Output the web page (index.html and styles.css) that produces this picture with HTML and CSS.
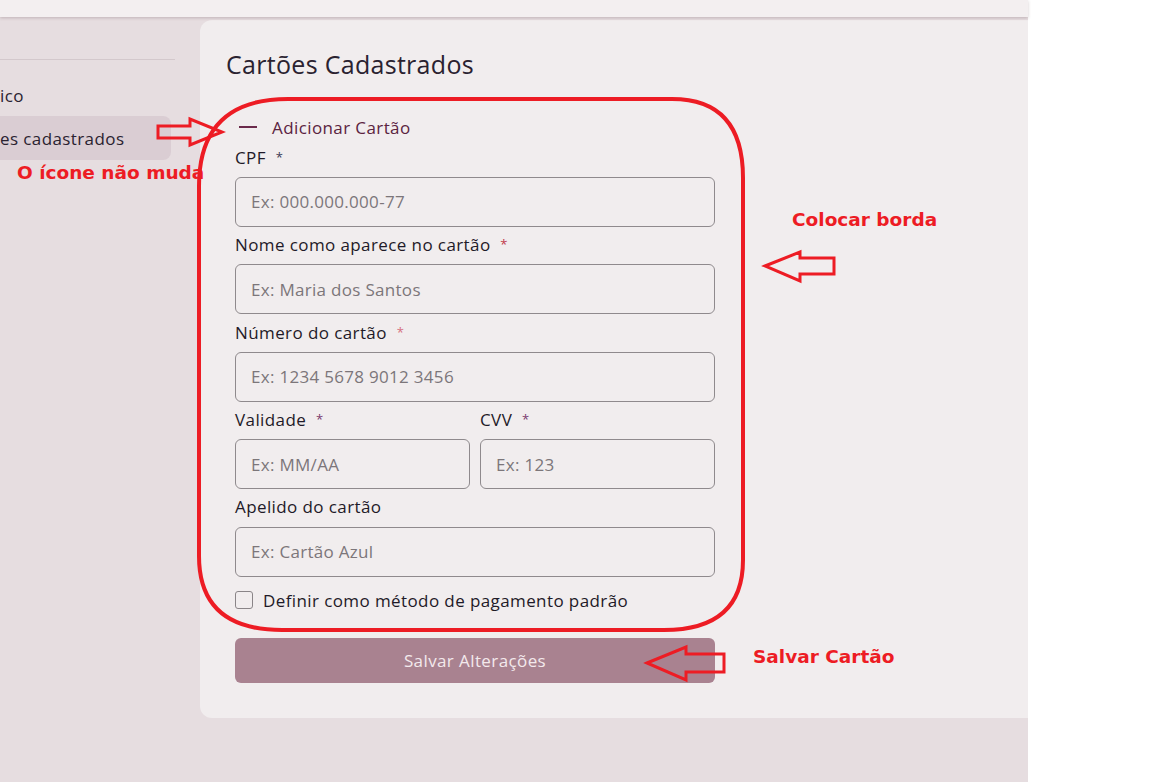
FILE: index.html
```html
<!DOCTYPE html>
<html lang="pt-BR">
<head>
<meta charset="utf-8">
<title>Cartões Cadastrados</title>
<link rel="stylesheet" href="styles.css">
</head>
<body>
<div class="app">
  <header class="topbar"></header>
  <div class="main">
    <aside class="sidebar">
      <div class="divider"></div>
      <nav class="nav">
        <a class="nav-item">ico</a>
        <a class="nav-item active">es cadastrados</a>
      </nav>
    </aside>
    <section class="card">
      <h2 class="title">Cartões Cadastrados</h2>
      <form class="form">
        <div class="toggle">
          <svg class="minus" width="18" height="4" viewBox="0 0 18 4"><rect x="0" y="1" width="18" height="2" fill="#6b2a4b"/></svg>
          <span>Adicionar Cartão</span>
        </div>
        <div class="field">
          <label class="label">CPF <span class="req req-dark">*</span></label>
          <input class="input" placeholder="Ex: 000.000.000-77">
        </div>
        <div class="field">
          <label class="label">Nome como aparece no cartão <span class="req req-red">*</span></label>
          <input class="input" placeholder="Ex: Maria dos Santos">
        </div>
        <div class="field">
          <label class="label">Número do cartão <span class="req req-pink">*</span></label>
          <input class="input" placeholder="Ex: 1234 5678 9012 3456">
        </div>
        <div class="row">
          <div class="field">
            <label class="label">Validade <span class="req req-purple">*</span></label>
            <input class="input" placeholder="Ex: MM/AA">
          </div>
          <div class="field">
            <label class="label">CVV <span class="req req-purple">*</span></label>
            <input class="input" placeholder="Ex: 123">
          </div>
        </div>
        <div class="field">
          <label class="label">Apelido do cartão</label>
          <input class="input" placeholder="Ex: Cartão Azul">
        </div>
        <label class="check">
          <input type="checkbox" class="checkbox">
          <span>Definir como método de pagamento padrão</span>
        </label>
        <button type="button" class="btn">Salvar Alterações</button>
      </form>
    </section>
  </div>

  <svg class="marks" width="1152" height="782" viewBox="0 0 1152 782">
    <path d="M288 99 L672 99 Q743 99 743 178 L743 560 Q743 630 664 630 L282 630 Q199 630 199 556 L199 186 Q199 99 288 99 Z" fill="none" stroke="#ed1c24" stroke-width="4"/>
    <path d="M158 126 L190 126 L190 119 L222 132 L190 145 L190 138 L158 138 Z" fill="none" stroke="#ed1c24" stroke-width="3"/>
    <path d="M765 266 L800 252 L800 258 L834 258 L834 274 L800 274 L800 281 Z" fill="none" stroke="#ed1c24" stroke-width="3"/>
    <path d="M647 663 L686 647 L686 654 L724 654 L724 672 L686 672 L686 680 Z" fill="none" stroke="#ed1c24" stroke-width="3"/>
  </svg>
  <div class="note note-icon">O ícone não muda</div>
  <div class="note note-border">Colocar borda</div>
  <div class="note note-save">Salvar Cartão</div>
</div>
</body>
</html>
```

FILE: styles.css
```css
* { box-sizing: border-box; }
html, body { margin: 0; padding: 0; background: #ffffff; }
body {
  font-family: "Open Sans", "Noto Sans", sans-serif;
  color: #1f1a28;
}
.app {
  position: relative;
  width: 1028px;
  height: 782px;
  background: #e6dde0;
}
.topbar {
  height: 17px;
  background: #f3eff0;
  box-shadow: 0 1px 3px rgba(80, 50, 60, 0.25);
  position: relative;
  z-index: 1;
}
.main {
  display: flex;
  align-items: flex-start;
  width: 1028px;
  overflow: hidden;
}
.sidebar {
  width: 200px;
  flex: none;
  padding-top: 42px;
}
.divider {
  width: 175px;
  height: 1px;
  background: #d3c8cc;
}
.nav {
  display: flex;
  flex-direction: column;
  margin-top: 14px;
}
.nav-item {
  display: flex;
  align-items: center;
  height: 42px;
  width: 171px;
  font-size: 17px;
  letter-spacing: 0.4px;
  color: #2a2230;
}
.nav-item.active {
  height: 44px;
  background: #dacdd3;
  border-radius: 0 8px 8px 0;
}
.card {
  flex: none;
  width: 900px;
  margin-top: 3px;
  background: #f1edee;
  border-radius: 12px;
  padding: 28px 0 35px 26px;
}
.title {
  margin: 0;
  font-size: 25px;
  line-height: 32px;
  font-weight: 400;
  letter-spacing: 0.3px;
  color: #2a2230;
}
.form {
  width: 480px;
  margin: 35px 0 0 9px;
  display: flex;
  flex-direction: column;
  letter-spacing: 0.4px;
}
.toggle {
  display: flex;
  align-items: center;
  height: 24px;
  padding-left: 4px;
  gap: 15px;
  font-size: 17px;
  color: #5b2340;
}
.minus { display: block; }
.field {
  display: flex;
  flex-direction: column;
  margin-top: 5.5px;
}
.label {
  height: 24px;
  line-height: 24px;
  margin-bottom: 8px;
  font-size: 17px;
  color: #1f1a28;
}
.req { margin-left: 5px; font-size: 13px; vertical-align: 2px; }
.req-dark { color: #3b3a55; }
.req-red { color: #c0394a; }
.req-pink { color: #d6707f; }
.req-purple { color: #7a3a6e; }
.input {
  height: 50px;
  width: 100%;
  border: 1px solid #8f8a8d;
  border-radius: 6px;
  background: transparent;
  padding: 0 15px;
  font-family: inherit;
  font-size: 17px;
  letter-spacing: 0.3px;
  color: #2a2230;
  outline: none;
}
.input::placeholder { color: #7c767a; }
.row {
  display: flex;
  gap: 10px;
}
.row .field { flex: 1; min-width: 0; }
.check {
  display: flex;
  align-items: center;
  gap: 10px;
  height: 24px;
  margin-top: 11.5px;
  font-size: 17px;
  color: #1f1a28;
}
.checkbox {
  appearance: none;
  -webkit-appearance: none;
  margin: 0;
  width: 18px;
  height: 18px;
  border: 1.5px solid #8a8588;
  border-radius: 3px;
  background: transparent;
}
.btn {
  margin-top: 26px;
  height: 45px;
  width: 480px;
  border: none;
  border-radius: 6px;
  background: #a98290;
  color: #f3e9ec;
  font-family: inherit;
  font-size: 17px;
  letter-spacing: 0.4px;
}
.marks {
  position: absolute;
  left: 0;
  top: 0;
  pointer-events: none;
  z-index: 5;
}
.note {
  position: absolute;
  z-index: 6;
  color: #ed1c24;
  font-family: "DejaVu Sans", sans-serif;
  font-weight: bold;
  font-size: 18.5px;
  line-height: 22px;
  white-space: nowrap;
}
.note-icon { left: 17px; top: 162px; }
.note-border { left: 792px; top: 209px; }
.note-save { left: 753px; top: 646px; }
```
